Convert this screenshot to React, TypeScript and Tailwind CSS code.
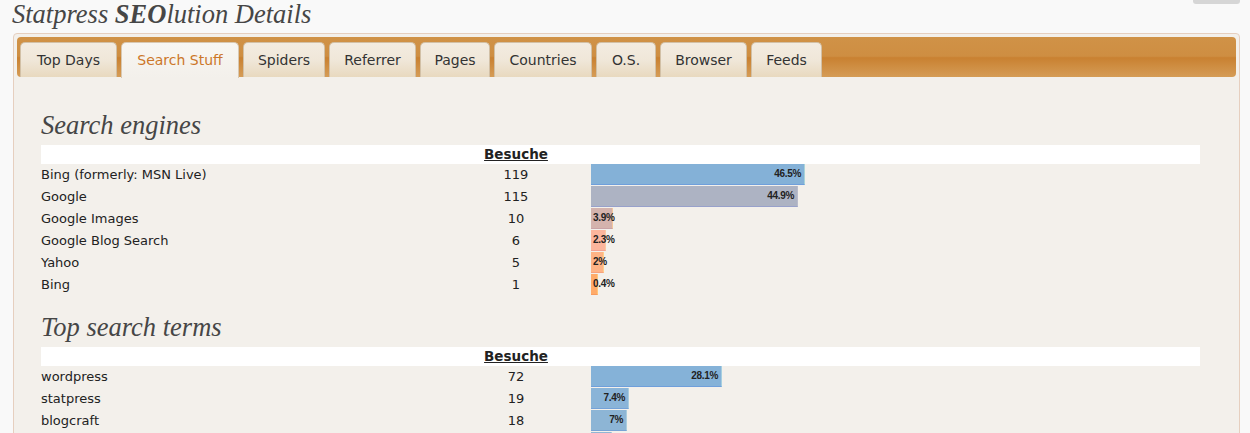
const TABS = [
  { label: 'Top Days', w: 'w-[97px]' },
  { label: 'Search Stuff', w: 'w-[118px]' },
  { label: 'Spiders', w: 'w-[82px]' },
  { label: 'Referrer', w: 'w-[87px]' },
  { label: 'Pages', w: 'w-[70px]' },
  { label: 'Countries', w: 'w-[98px]' },
  { label: 'O.S.', w: 'w-[60px]' },
  { label: 'Browser', w: 'w-[87px]' },
  { label: 'Feeds', w: 'w-[71px]' },
];

type Row = { name: string; count: number; pct: string; w: number; bar: string };

const ENGINES: Row[] = [
  { name: 'Bing (formerly: MSN Live)', count: 119, pct: '46.5%', w: 214, bar: 'bg-[#84b1d7] border-b-[#6f9fdb] border-r-[#a9d4d8]' },
  { name: 'Google', count: 115, pct: '44.9%', w: 207, bar: 'bg-[#adb3c3] border-b-[#98a1cb] border-r-[#b9bccb]' },
  { name: 'Google Images', count: 10, pct: '3.9%', w: 22, bar: 'bg-[#d4b3ad] border-b-[#c9a3a6] border-r-[#f3c79c]' },
  { name: 'Google Blog Search', count: 6, pct: '2.3%', w: 15, bar: 'bg-[#fbb59c] border-b-[#f2a295] border-r-[#fcc8a0]' },
  { name: 'Yahoo', count: 5, pct: '2%', w: 13, bar: 'bg-[#feb386] border-b-[#f6a27d] border-r-[#ffd08c]' },
  { name: 'Bing', count: 1, pct: '0.4%', w: 7, bar: 'bg-[#ffab69] border-b-[#f79c5f] border-r-[#ffc77a]' },
];

const TERMS: Row[] = [
  { name: 'wordpress', count: 72, pct: '28.1%', w: 131, bar: 'bg-[#85b2d8] border-b-[#6f9fdb] border-r-[#a6cfe0]' },
  { name: 'statpress', count: 19, pct: '7.4%', w: 38, bar: 'bg-[#8ab4d8] border-b-[#74a2d8] border-r-[#a8cde0]' },
  { name: 'blogcraft', count: 18, pct: '7%', w: 36, bar: 'bg-[#8db5d5] border-b-[#77a3d5] border-r-[#aacddd]' },
  { name: 'statpress seolution', count: 10, pct: '3.9%', w: 21, bar: 'bg-[#90b6d4] border-b-[#7aa4d4] border-r-[#abcddc]' },
];

function StatTable({ rows }: { rows: Row[] }) {
  return (
    <div className="font-['DejaVu_Sans',Verdana,sans-serif] text-[13px] text-[#222]">
      <div className="flex h-[19px] bg-white">
        <div className="w-[400px]" />
        <div className="w-[150px] text-center text-[13.5px] font-bold underline leading-[19px]">Besuche</div>
        <div className="flex-1" />
      </div>
      {rows.map((r) => (
        <div key={r.name} className="flex h-[22px] items-start">
          <div className="w-[400px] leading-[22px]">{r.name}</div>
          <div className="w-[150px] text-center leading-[22px]">{r.count}</div>
          <div className="flex-1">
            <div
              className={`box-border h-[21px] whitespace-nowrap border-b border-r pl-[2px] pr-[3px] text-right font-['Liberation_Sans',Arial,sans-serif] text-[10px] font-bold leading-[20px] tracking-[-0.3px] text-[#222] ${r.bar}`}
              style={{ width: r.w }}
            >
              {r.pct}
            </div>
          </div>
        </div>
      ))}
    </div>
  );
}

export default function App() {
  return (
    <div className="min-h-screen overflow-hidden bg-[#f9f9f9] pl-[12px] pr-[10px]">
      <div className="flex items-start justify-between">
        <h1 className="font-['Liberation_Serif',Georgia,serif] text-[26.5px] italic leading-[28px] text-[#464646]">
          Statpress <b>SEO</b>lution Details
        </h1>
        <div className="h-[4px] w-[47px] rounded-b-[3px] bg-[#d6d6d6]" />
      </div>

      <div className="ml-px mt-[5px] rounded-[4px] border border-[#e6cfbf] bg-[#f3f0eb]">
        <div className="p-[3px] pb-0">
          <div className="flex h-[40px] items-end gap-[4px] rounded-[4px] bg-[linear-gradient(to_bottom,#d09247_0%,#ce8e42_48%,#c98131_52%,#d59c56_100%)] pl-[3px]">
            {TABS.map((t) =>
              t.label === 'Search Stuff' ? (
                <div
                  key={t.label}
                  className={`-mb-px flex h-[36px] items-center justify-center rounded-t-[5px] border border-b-0 border-[#d8c8b2] bg-linear-to-b from-[#f8f6f2] to-[#f3f0eb] font-['DejaVu_Sans',Verdana,sans-serif] text-[14px] text-[#cc7729] ${t.w}`}
                >
                  {t.label}
                </div>
              ) : (
                <div
                  key={t.label}
                  className={`flex h-[35px] items-center justify-center rounded-t-[5px] border border-b-0 border-[#d2c0a6] bg-linear-to-b from-[#f3ece1] via-[#f0e7d9] to-[#e8d9bf] font-['DejaVu_Sans',Verdana,sans-serif] text-[14px] text-[#333] ${t.w}`}
                >
                  {t.label}
                </div>
              )
            )}
          </div>
        </div>

        <div className="pb-[20px] pl-[27px] pr-[39px] pt-[32px]">
          <h2 className="mb-[4px] font-['Liberation_Serif',Georgia,serif] text-[26.5px] italic leading-[32px] text-[#464646]">
            Search engines
          </h2>
          <StatTable rows={ENGINES} />
          <h2 className="mb-[4px] mt-[15px] font-['Liberation_Serif',Georgia,serif] text-[26.5px] italic leading-[32px] text-[#464646]">
            Top search terms
          </h2>
          <StatTable rows={TERMS} />
        </div>
      </div>
    </div>
  );
}
